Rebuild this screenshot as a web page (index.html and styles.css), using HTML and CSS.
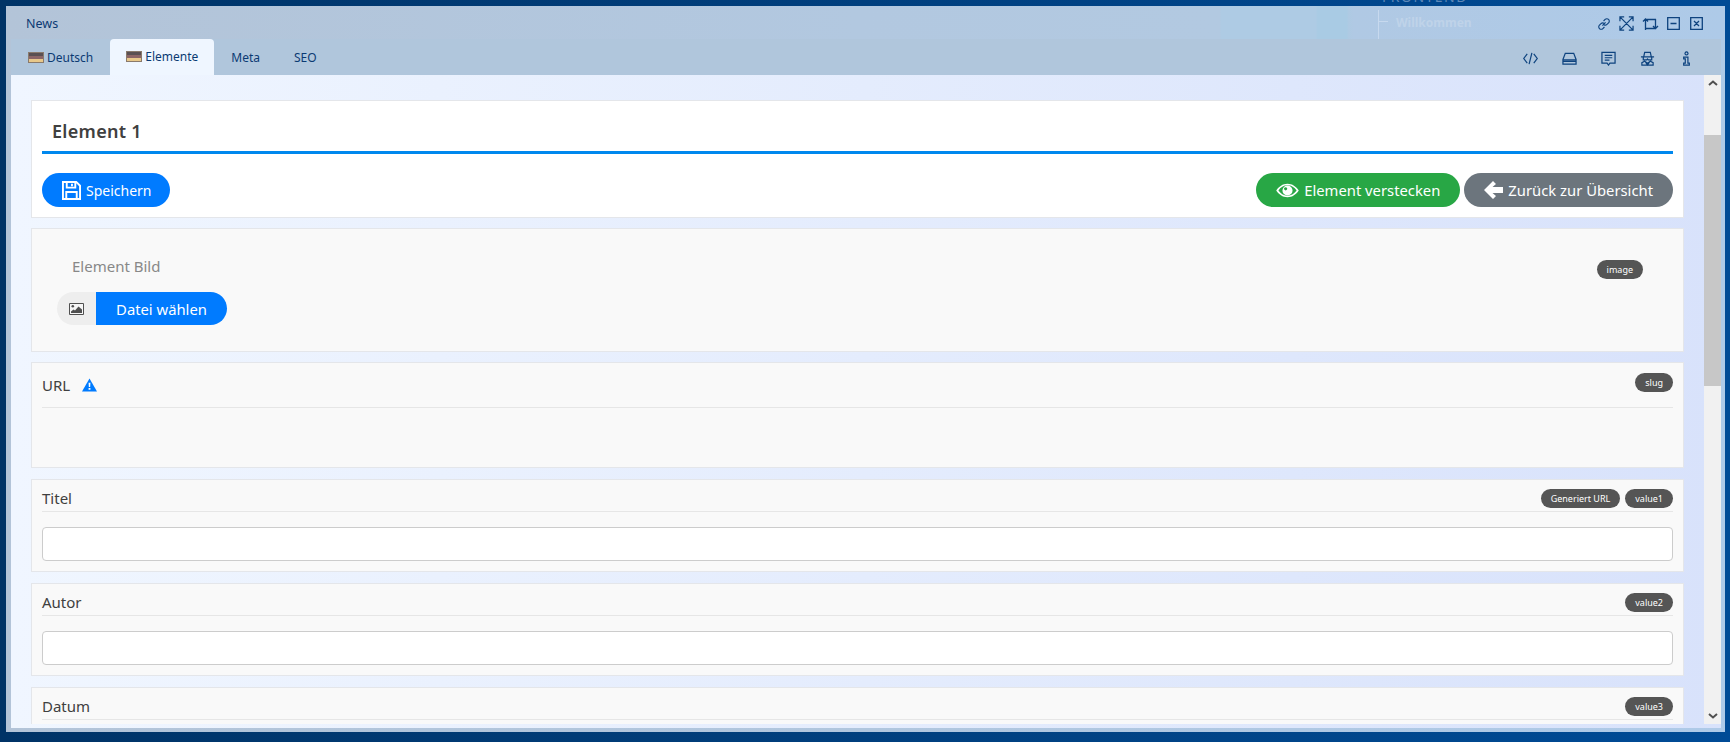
FILE: index.html
```html
<!DOCTYPE html>
<html lang="de">
<head>
    <meta charset="UTF-8">
    <title>News</title>
    <link rel="stylesheet" href="styles.css">
</head>
<body>
    <!-- durchscheinendes Menü hinter dem Fenster -->
    <div class="ghost-top">FRONTEND</div>

    <div class="window">
        <!-- Titelleiste -->
        <header class="titlebar">
            <span class="title">News</span>
            <div class="ghost-menu"><span class="ghost-line"></span>Willkommen</div>
            <div class="win-icons">
                <svg class="icon" viewBox="0 0 16 16"><path d="M6.200 9.800 9.800 6.200M7.500 4.600l1.800-1.800a2.700 2.700 0 0 1 3.900 3.900l-1.800 1.800a2.700 2.700 0 0 1-3.400.3M8.500 11.400l-1.800 1.800a2.700 2.700 0 0 1-3.900-3.900l1.800-1.800a2.700 2.700 0 0 1 3.400-.3"/></svg>
                <svg class="icon icon-expand" viewBox="0 0 16 16"><path d="M1 1l14 14M15 1 1 15M1 5.500V1h4.500M10.500 1H15v4.500M15 10.500V15h-4.500M5.500 15H1v-4.500"/></svg>
                <svg class="icon icon-crop" viewBox="0 0 17 14"><path d="M3.500 13V2.500h10.500M13.500 2v9.500H3M1 4.500 3.500 2 6 4.500M11 9l2.500 2.500L16 9"/></svg>
                <svg class="icon icon-small" viewBox="0 0 13 13"><path d="M.7.700h11.600v11.600H.700zM3.500 6.500h6"/></svg>
                <svg class="icon icon-small icon-close" viewBox="0 0 13 13"><path d="M.7.700h11.600v11.600H.700zM4 4l5 5M9 4 4 9"/></svg>
            </div>
        </header>

        <!-- Tabs -->
        <nav class="tabbar">
            <ul class="tabs">
                <li class="tab"><span class="flag"></span>Deutsch</li>
                <li class="tab active"><span class="flag"></span>Elemente</li>
                <li class="tab">Meta</li>
                <li class="tab">SEO</li>
            </ul>
            <div class="tab-icons">
                <svg class="icon" viewBox="0 0 16 16"><path d="M4.500 3 .8 8l3.700 5M11.500 3l3.700 5-3.700 5M9.500 2 6.500 14"/></svg>
                <svg class="icon" viewBox="0 0 16 16"><path d="M1 9 3.500 2.500h9L15 9v5H1zM1 9.500h14M1 11h14"/></svg>
                <svg class="icon" viewBox="0 0 16 16"><path d="M1 1.500h14v11.500H9.500L8 15l-1.500-2H1zM4 4.700h8M4 7.200h8M4 9.700h5"/></svg>
                <svg class="icon" viewBox="0 0 16 16"><path d="M4 6 5 1.500h6L12 6M1 6.300h14M3.500 7v2.500h3.700L8 8.500l.8 1h3.700V7M2 15v-2.500L5 11l3 2 3-2 3 1.500V15zM6 12l2 3 2-3"/></svg>
                <svg class="icon" viewBox="0 0 16 16"><path d="M8 1a1.600 1.600 0 1 0 .01 0zM5 6.500H9.500V13H11v2H5v-2h1.700V8.300H5z"/></svg>
            </div>
        </nav>

        <!-- Inhalt -->
        <div class="content">
            <main class="scroll-area">
                <section class="panel panel-white">
                    <h2 class="panel-title">Element 1</h2>
                    <div class="actions">
                        <button class="btn btn-blue">
                            <svg class="btn-icon" viewBox="0 0 20 20"><path class="line" d="M1 1h14l4 4v14H1zM5 1v6h9V1M10.500 3v2.500M4.500 19v-7.500h11V19"/></svg>
                            Speichern
                        </button>
                        <div class="actions-right">
                            <button class="btn btn-green">
                                <svg class="btn-icon btn-icon-eye" viewBox="0 0 24 16"><path class="fill" fill-rule="evenodd" d="M12 .8C6.800.8 2.800 3.800 0 8c2.800 4.200 6.800 7.200 12 7.200S21.200 12.200 24 8C21.200 3.800 17.200.8 12 .8zM12 2.500C7.800 2.500 4.600 4.700 2.300 8c2.300 3.300 5.500 5.500 9.700 5.500s7.400-2.200 9.700-5.500C19.400 4.700 16.200 2.500 12 2.500z"/><path class="fill" fill-rule="evenodd" d="M12 2.600a5.400 5.400 0 1 1 0 10.800 5.400 5.400 0 0 1 0-10.800zM10 4.500a1.700 1.700 0 1 0 .01 0z"/></svg>
                                Element verstecken
                            </button>
                            <button class="btn btn-gray">
                                <svg class="btn-icon btn-icon-arrow" viewBox="0 0 19 18"><path class="fill" d="M9 0 12 3 8.500 6H19v6H8.500L12 15 9 18 0 9z"/></svg>
                                Zurück zur Übersicht
                            </button>
                        </div>
                    </div>
                </section>

                <section class="panel panel-image">
                    <div class="image-left">
                        <label class="image-label">Element Bild</label>
                        <div class="file-group">
                            <span class="file-addon">
                                <svg class="file-icon" viewBox="0 0 15 12"><path class="file-frame" d="M.5.500h14v11H.500z"/><path class="file-shape" d="M2 10V8.500l2.500-2 1.500 1 3.500-4L13 6.500V10z"/><circle class="file-shape" cx="3.800" cy="3.300" r="1.300"/></svg>
                            </span>
                            <span class="file-btn">Datei wählen</span>
                        </div>
                    </div>
                    <span class="badge badge-image">image</span>
                </section>

                <section class="panel panel-url">
                    <div class="field-head field-head-url">
                        <span class="field-label">URL
                            <svg class="warn" viewBox="0 0 16 14"><path class="warn-bg" d="M8 0 16 14H0z"/><path class="warn-mark" d="M7 4.500h2l-.3 4.500H7.300zM7 10.200h2V12H7z"/></svg>
                        </span>
                        <span class="badge">slug</span>
                    </div>
                </section>

                <section class="panel">
                    <div class="field-head">
                        <span class="field-label">Titel</span>
                        <div class="badges"><span class="badge">Generiert URL</span><span class="badge">value1</span></div>
                    </div>
                    <input class="field-input" type="text">
                </section>

                <section class="panel">
                    <div class="field-head">
                        <span class="field-label">Autor</span>
                        <span class="badge">value2</span>
                    </div>
                    <input class="field-input" type="text">
                </section>

                <section class="panel">
                    <div class="field-head">
                        <span class="field-label">Datum</span>
                        <span class="badge">value3</span>
                    </div>
                    <input class="field-input" type="text">
                </section>
            </main>

            <!-- Scrollbalken -->
            <div class="scrollbar">
                <svg class="arrow" viewBox="0 0 10 6"><path d="M1 5 5 1.500 9 5"/></svg>
                <div class="thumb"></div>
                <svg class="arrow arrow-down" viewBox="0 0 10 6"><path d="M1 1 5 4.500 9 1"/></svg>
            </div>
        </div>
    </div>
</body>
</html>
```

FILE: styles.css
```css
* {
    margin: 0;
    padding: 0;
    box-sizing: border-box;
}

html,
body {
    height: 742px;
    overflow: hidden;
}

body {
    padding: 6px 5px 10px 6px;
    font-family: "Noto Sans", "Open Sans", sans-serif;
    background: linear-gradient(90deg, #003366, #004b96);
    position: relative;
}

.ghost-top {
    position: absolute;
    top: -11px;
    left: 1382px;
    font-size: 14px;
    line-height: 16px;
    letter-spacing: 1.500px;
    color: #5d88b8;
}

.window {
    height: 726px;
    padding: 0 4px 4px 5px;
    display: flex;
    flex-direction: column;
    background: linear-gradient(90deg, #b3c4d8, #b0c6de 50%, #aecae8);
}

/* Titelleiste */
.titlebar {
    height: 33px;
    margin: 0 -4px 0 -5px;
    padding: 0 22px 0 20px;
    display: flex;
    align-items: center;
    justify-content: space-between;
    position: relative;
    background: linear-gradient(90deg,
        #b3c4d8,
        #b2c8e0 49.600%,
        #b2c9e1 70.600%,
        #aecbe4 70.700%,
        #aecbe4 76.200%,
        #a9cbe4 76.300%,
        #a9cbe4 78%,
        #aecae3 78.100%,
        #b0c9e4 78.400%,
        #aecae8);
}

.title {
    margin-top: 1px;
    font-size: 12.500px;
    color: #0b3a73;
}

.ghost-menu {
    position: absolute;
    left: 1372px;
    top: 4px;
    height: 29px;
    padding-left: 18px;
    font-size: 12px;
    line-height: 25px;
    font-weight: 700;
    color: #bfd3e9;
}

.ghost-line {
    position: absolute;
    left: 0;
    top: 0;
    width: 10px;
    height: 100%;
    border-left: 1px solid #c7d9ee;
    background: linear-gradient(#c7d9ee, #c7d9ee) no-repeat 0 11px / 10px 1px;
}

.win-icons,
.tab-icons {
    display: flex;
    align-items: center;
}

.win-icons {
    gap: 8px;
    margin-top: 2px;
}

.tab-icons {
    gap: 24px;
    margin-top: 3px;
    padding-right: 27px;
}

.icon {
    width: 14px;
    height: 14px;
    fill: none;
    stroke: #0e437f;
    stroke-width: 1.300;
}

.icon-expand {
    width: 15px;
    height: 15px;
}

.icon-crop {
    width: 17px;
}

.icon-small {
    width: 13px;
    height: 13px;
}

.icon-close {
    margin-left: 2px;
}

.tab-icons .icon {
    width: 15px;
    height: 15px;
}

/* Tabs */
.tabbar {
    height: 36px;
    display: flex;
    align-items: center;
    justify-content: space-between;
    background: #b0c6dc;
}

.tabs {
    height: 100%;
    display: flex;
    list-style-type: none;
}

.tab {
    height: 100%;
    padding: 0 17px;
    display: flex;
    align-items: center;
    font-size: 12px;
    color: #0b3a73;
}

.tab.active {
    padding: 0 16px 2px;
    border-radius: 4px 4px 0 0;
    background: #eff6ff;
}

.flag {
    width: 16px;
    height: 11px;
    margin-right: 3px;
    border: 1px solid #8a7a6c;
    background: linear-gradient(#5a5052 30%, #8b6566 30%, #8b6566 65%, #e8c88a 65%);
}

/* Inhalt */
.content {
    flex: 1;
    min-height: 0;
    padding-bottom: 4px;
    display: flex;
    background: linear-gradient(90deg, #f0f6ff, #d8e2fb);
}

.scroll-area {
    flex: 1;
    min-width: 0;
    padding: 25px 20px 0 20px;
    overflow: hidden;
}

.scrollbar {
    width: 17px;
    display: flex;
    flex-direction: column;
    align-items: center;
    background: #f1f1f1;
}

.arrow {
    flex: none;
    width: 10px;
    height: 6px;
    margin-top: 5px;
    fill: none;
    stroke: #505050;
    stroke-width: 2;
}

.arrow-down {
    margin: 0 0 5px;
}

.thumb {
    flex: none;
    width: 100%;
    height: 251px;
    margin: 49px 0 auto;
    background: #c7c7c7;
}

/* Panels */
.panel {
    margin-bottom: 11px;
    padding: 9px 10px 10px;
    border: 1px solid #e4e6ea;
    background-color: #f9f9f9;
}

.panel-white {
    height: 118px;
    padding-top: 0;
    margin-bottom: 10px;
    background-color: #fff;
}

.panel-title {
    height: 53px;
    padding: 18px 0 0 10px;
    border-bottom: 3px solid #0088ee;
    font-size: 18px;
    line-height: 24px;
    font-weight: 600;
    letter-spacing: 0.300px;
    color: #404040;
}

.actions {
    margin-top: 19px;
    display: flex;
    justify-content: space-between;
}

.actions-right {
    display: flex;
    gap: 4px;
}

.btn {
    height: 34px;
    padding: 0 20px;
    display: flex;
    align-items: center;
    border: none;
    border-radius: 17px;
    font-family: inherit;
    font-size: 14.800px;
    color: #fff;
}

.btn-blue {
    padding-right: 18px;
    font-size: 14px;
    background-color: #007bff;
}

.btn-green {
    background-color: #28a745;
}

.btn-gray {
    background-color: #6c757d;
}

.btn-icon {
    width: 19px;
    height: 19px;
    margin-right: 5px;
}

.btn-icon-eye {
    width: 23px;
    height: 15px;
}

.btn-icon-arrow {
    height: 18px;
}

.line {
    fill: none;
    stroke: #fff;
    stroke-width: 2;
}

.fill {
    fill: #fff;
}

.panel-image {
    height: 124px;
    margin-bottom: 10px;
    padding: 28px 40px 0 25px;
    display: flex;
    justify-content: space-between;
    align-items: flex-start;
}

.image-label {
    display: block;
    padding-left: 15px;
    font-size: 15px;
    line-height: 19px;
    color: #888;
}

.file-group {
    margin-top: 16px;
    display: flex;
    height: 33px;
}

.file-addon {
    width: 39px;
    display: flex;
    align-items: center;
    justify-content: center;
    border-radius: 17px 0 0 17px;
    background-color: #eeeeee;
}

.file-icon {
    width: 15px;
    height: 12px;
}

.file-frame {
    fill: #f6f6f6;
    stroke: #505050;
}

.file-shape {
    fill: #505050;
}

.file-btn {
    width: 131px;
    display: flex;
    align-items: center;
    justify-content: center;
    border-radius: 0 17px 17px 0;
    font-size: 14.800px;
    color: #fff;
    background-color: #007bff;
}

.badge {
    flex: none;
    height: 19px;
    padding: 0 10px;
    border-radius: 10px;
    font-size: 9px;
    line-height: 19px;
    color: #fff;
    background-color: #555;
}

.badge-image {
    margin-top: 3px;
}

.panel-url {
    height: 106px;
    padding-top: 10px;
}

.field-head {
    height: 23px;
    display: flex;
    justify-content: space-between;
    align-items: flex-start;
    border-bottom: 1px solid #e6e6e6;
}

.field-head-url {
    height: 35px;
}

.field-label {
    display: flex;
    align-items: center;
    font-size: 15px;
    line-height: 18px;
    color: #404040;
}

.field-head-url .field-label {
    margin-top: 3px;
}

.warn {
    width: 15px;
    height: 14px;
    margin-left: 12px;
}

.warn-bg {
    fill: #007bff;
}

.warn-mark {
    fill: #fff;
}

.badges {
    display: flex;
    gap: 5px;
}

.field-input {
    display: block;
    width: 100%;
    height: 34px;
    margin-top: 15px;
    border: 1px solid #ccc;
    border-radius: 4px;
    background-color: #fff;
}
```
